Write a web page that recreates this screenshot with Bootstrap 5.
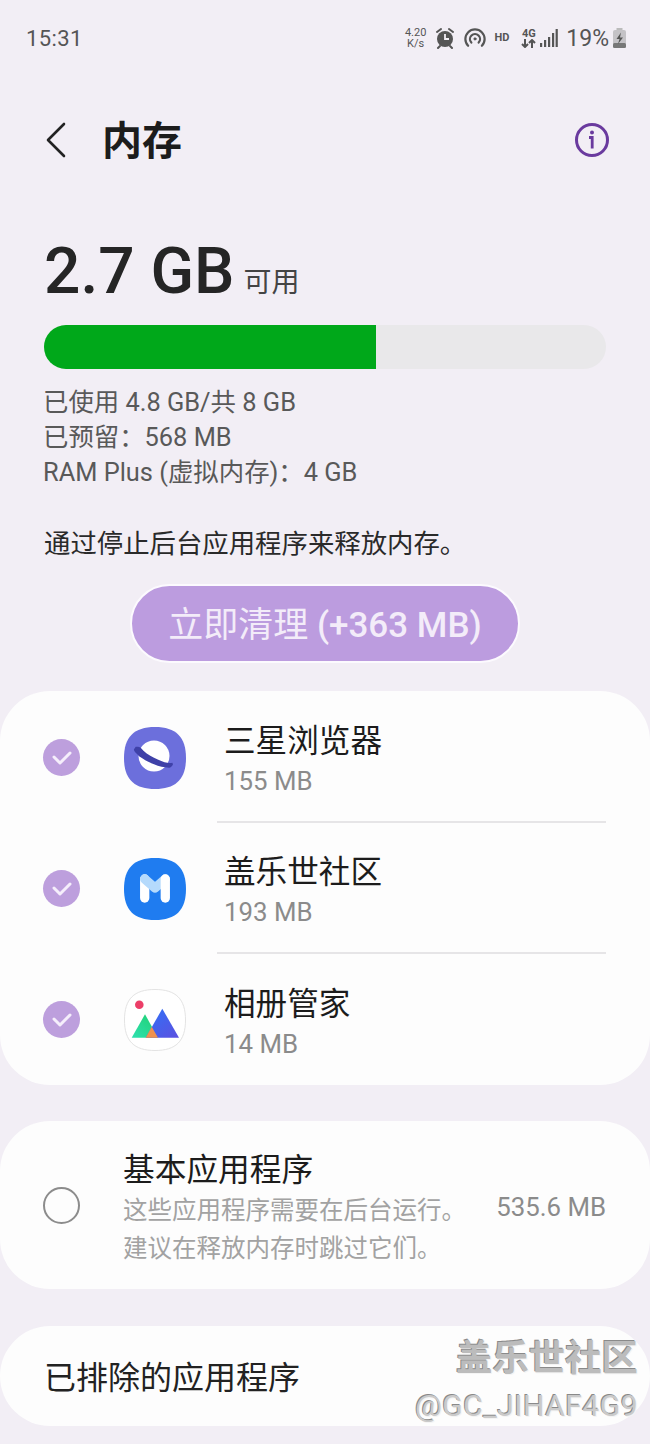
<!DOCTYPE html>
<html lang="zh">
<head>
  <meta charset="UTF-8">
  <title>内存</title>
  <meta name="viewport" content="width=device-width, initial-scale=1">
  <link href="https://cdn.jsdelivr.net/npm/bootstrap@5.3.0/dist/css/bootstrap.min.css" rel="stylesheet">
  <style>
    body {
      width: 650px;
      height: 1444px;
      overflow: hidden;
      position: relative;
      background: #f2eef5;
      font-family: Roboto, "Noto Sans CJK SC", sans-serif;
      color: #222;
    }

    .status-bar {
      height: 76px;
      padding: 0 24px 0 26px;
      color: #555;
    }
    .status-time { font-size: 22px; letter-spacing: .4px; }
    .status-speed { font-size: 11px; line-height: 11px; text-align: center; }
    .status-hd { font-size: 11px; font-weight: 700; }
    .status-4g { font-size: 11px; font-weight: 700; line-height: 10px; text-align: center; }
    .status-batt { font-size: 23px; padding-top: 3px; }

    .top-bar {
      height: 128px;
      padding: 0 40px 0 46px;
    }
    .top-title {
      font-size: 40px;
      font-weight: 700;
      color: #1c1c1c;
      margin: 4px 0 0 36px;
    }

    .free-line { padding: 36px 44px 0; height: 121px; }
    .free-num { font-size: 64px; font-weight: 500; line-height: 1; color: #252525; }
    .free-unit { font-size: 28px; line-height: 28px; color: #444; margin: 29px 0 0 9px; }

    .ram-bar {
      height: 44px;
      margin: 0 44px;
      border-radius: 22px;
      background: #e9e8ea;
    }
    .ram-bar .progress-bar { background: #00a81a; }

    .ram-info {
      margin: 16px 43px 0;
      font-size: 25.4px;
      line-height: 35px;
      color: #595959;
    }
    .ram-hint {
      margin: 37px 44px 0;
      font-size: 26.4px;
      line-height: 35px;
      color: #2a2a2a;
    }

    .clean-wrap { padding-top: 22px; }
    .btn-clean {
      width: 390px;
      height: 79px;
      padding: 5px 0 0;
      border: 2px solid #fcfafe;
      border-radius: 40px;
      background: #bc9cdf;
      color: #f3ecf9;
      font-size: 35px;
    }
    .btn-clean-num { font-weight: 500; }

    .panel {
      background: #fdfdfd;
      border-radius: 50px;
    }
    .panel-apps { margin-top: 28px; height: 394px; padding-top: 1px; }
    .panel-basic { margin-top: 36px; height: 168px; padding: 0 44px 0 43px; }
    .panel-excl {
      margin-top: 37px;
      height: 100px;
      padding: 3px 0 0 44px;
      font-size: 32px;
      color: #222;
    }

    .app-row { height: 131px; padding-left: 43px; }
    .check-dot {
      width: 37px;
      height: 37px;
      border-radius: 50%;
      background: #bd9fdd;
      flex: none;
    }
    .app-icon { width: 62px; height: 62px; margin-left: 44px; flex: none; }
    .app-text {
      height: 131px;
      margin: 0 44px 0 31px;
      padding: 6px 0 0 7px;
      flex: 1;
      border-bottom: 2px solid #e6e5e7;
    }
    .app-row:last-child .app-text { border-bottom: 0; }
    .app-name { font-size: 31.6px; line-height: 42px; color: #1c1c1c; }
    .app-size { font-size: 25.8px; line-height: 36px; color: #8b8b8b; }

    .radio-dot {
      width: 37px;
      height: 37px;
      border-radius: 50%;
      border: 2px solid #8c8c8c;
      flex: none;
    }
    .basic-text { margin-left: 43px; padding-top: 8px; }
    .basic-name { font-size: 31.7px; line-height: 42px; color: #1c1c1c; }
    .basic-desc { font-size: 24.5px; line-height: 38px; color: #a2a2a2; }
    .basic-size { font-size: 25.8px; color: #8b8b8b; padding-top: 4px; }

    /* forum stamp sits over the last panel */
    .stamp {
      position: absolute;
      right: 12px;
      top: 1337px;
      text-align: right;
      color: #bcbcbc;
      text-shadow: -1px -1px 0 #8a8a8a, 1px 1px 0 #f4f4f4;
    }
    .stamp-name { font-size: 36.4px; font-weight: 700; line-height: 44px; }
    .stamp-id { font-size: 30px; line-height: 40px; margin-top: 5px; letter-spacing: .5px; color: #cacaca; }
  </style>
</head>
<body>

  <div class="status-bar d-flex align-items-center justify-content-between">
    <span class="status-time">15:31</span>
    <div class="d-flex align-items-center gap-2">
      <div class="status-speed">4.20<br>K/s</div>
      <svg width="22" height="22" viewBox="0 0 22 22">
        <circle cx="11" cy="12" r="8" fill="#555"/>
        <path d="M3 5l4-3M19 5l-4-3M6 19l-2 2M16 19l2 2" stroke="#555" stroke-width="2" stroke-linecap="round" fill="none"/>
        <path d="M11 7v5h4" stroke="#f2eef5" stroke-width="1.8" fill="none"/>
      </svg>
      <svg width="22" height="22" viewBox="0 0 24 22" fill="none" stroke="#555" stroke-width="2.4" stroke-linecap="round">
        <path d="M4.5 19.5a10.5 10.5 0 1 1 15 0"/>
        <path d="M8 16a5.500 5.500 0 1 1 8 0"/>
        <circle cx="12" cy="12" r="1.2" fill="#555" stroke-width="1"/>
      </svg>
      <span class="status-hd">HD</span>
      <div class="d-flex align-items-center gap-1 ms-1">
        <div class="status-4g">4G<br>
          <svg width="15" height="9" viewBox="0 0 15 9" fill="none" stroke="#555" stroke-width="2" class="d-block"><path d="M4 0v8M1 5l3 3 3-3M11 9V1M8 4l3-3 3 3"/></svg>
        </div>
        <svg width="18" height="18" viewBox="0 0 18 18" fill="#555">
          <rect x="0" y="14" width="2.2" height="4"/><rect x="4" y="11" width="2.2" height="7"/><rect x="8" y="8" width="2.2" height="10"/><rect x="12" y="4" width="2.2" height="14"/><rect x="15.6" y="0" width="2.2" height="18"/>
        </svg>
      </div>
      <div class="d-flex align-items-center gap-1">
        <span class="status-batt">19%</span>
        <svg width="13" height="20" viewBox="0 0 13 20">
          <rect x="3.5" y="0" width="6" height="2" fill="#bbb"/>
          <rect x="0" y="2" width="13" height="18" rx="2" fill="#c4c2c6"/>
          <rect x="0" y="15" width="13" height="5" rx="1.5" fill="#777"/>
          <path d="M8 4.500L3.500 11h3l-1.500 5L10 9.500H7z" fill="#555"/>
        </svg>
      </div>
    </div>
  </div>

  <div class="top-bar d-flex align-items-center">
    <svg width="20" height="36" viewBox="0 0 20 36" fill="none" stroke="#222" stroke-width="2.6" stroke-linecap="round" stroke-linejoin="round">
      <path d="M18 2L2 18l16 16"/>
    </svg>
    <h1 class="top-title">内存</h1>
    <svg class="ms-auto" width="36" height="36" viewBox="0 0 36 36" fill="none" stroke="#6a3a9e" stroke-width="3">
      <circle cx="18" cy="18" r="15.5"/>
      <circle cx="18" cy="10.5" r="2" fill="#6a3a9e" stroke="none"/>
      <path d="M15 15.5h3.2v11" stroke-width="2.8"/>
    </svg>
  </div>

  <div class="free-line d-flex align-items-start">
    <span class="free-num">2.7 GB</span>
    <span class="free-unit">可用</span>
  </div>

  <div class="progress ram-bar">
    <div class="progress-bar" style="width: 59%"></div>
  </div>

  <div class="ram-info">
    <div>已使用 4.8 GB/共 8 GB</div>
    <div>已预留：568 MB</div>
    <div>RAM Plus (虚拟内存)：4 GB</div>
  </div>

  <p class="ram-hint mb-0">通过停止后台应用程序来释放内存。</p>

  <div class="clean-wrap text-center">
    <button class="btn btn-clean" type="button">立即清理 <span class="btn-clean-num">(+363 MB)</span></button>
  </div>

  <div class="panel panel-apps">
    <div class="app-row d-flex align-items-center">
      <div class="check-dot d-flex align-items-center justify-content-center">
        <svg width="20" height="15" viewBox="0 0 20 15" fill="none" stroke="#f5eefb" stroke-width="3" stroke-linecap="round" stroke-linejoin="round"><path d="M2 7l6 6L18 3"/></svg>
      </div>
      <svg class="app-icon" viewBox="0 0 62 62">
        <path d="M31 0C52 0 62 10 62 31S52 62 31 62 0 52 0 31 10 0 31 0z" fill="#6c6fdc"/>
        <circle cx="30" cy="29" r="15.500" fill="#fff"/>
        <path d="M11.700 19.700C14 19.500 16 20 16.700 20.700C20 25 25 28.500 30 30.700C35 33 40 35.500 43.300 35.700C45 36 47 36 48.300 35.700L49 37.300C48 40 46 41 45 40.700C40 40.500 35 39.500 30 37.300C22 34 15 30 13.300 27.300C11 25 9.500 23 10 22.300Z" fill="#3f41a8"/>
      </svg>
      <div class="app-text d-flex flex-column justify-content-center">
        <div class="app-name">三星浏览器</div>
        <div class="app-size">155 MB</div>
      </div>
    </div>
    <div class="app-row d-flex align-items-center">
      <div class="check-dot d-flex align-items-center justify-content-center">
        <svg width="20" height="15" viewBox="0 0 20 15" fill="none" stroke="#f5eefb" stroke-width="3" stroke-linecap="round" stroke-linejoin="round"><path d="M2 7l6 6L18 3"/></svg>
      </div>
      <svg class="app-icon" viewBox="0 0 62 62" fill="none" stroke-width="9.300" stroke-linecap="round" stroke-linejoin="round">
        <path d="M31 0C52 0 62 10 62 31S52 62 31 62 0 52 0 31 10 0 31 0z" fill="#1f7cf0"/>
        <path d="M20.700 21v19" stroke="#fff"/>
        <path d="M20.700 21L31 30 41.300 21" stroke="#b5dafc"/>
        <path d="M41.300 21v19" stroke="#fff"/>
      </svg>
      <div class="app-text d-flex flex-column justify-content-center">
        <div class="app-name">盖乐世社区</div>
        <div class="app-size">193 MB</div>
      </div>
    </div>
    <div class="app-row d-flex align-items-center">
      <div class="check-dot d-flex align-items-center justify-content-center">
        <svg width="20" height="15" viewBox="0 0 20 15" fill="none" stroke="#f5eefb" stroke-width="3" stroke-linecap="round" stroke-linejoin="round"><path d="M2 7l6 6L18 3"/></svg>
      </div>
      <svg class="app-icon" viewBox="0 0 62 62">
        <defs>
          <linearGradient id="peakGreen" x1="0" y1="1" x2="1" y2="0"><stop offset="0" stop-color="#2ee0b0"/><stop offset="1" stop-color="#1ed06e"/></linearGradient>
          <linearGradient id="peakBlue" x1="0" y1="0" x2="1" y2="1"><stop offset="0" stop-color="#2d73f8"/><stop offset="1" stop-color="#5d50e0"/></linearGradient>
        </defs>
        <path d="M31 .5C52 .5 61.500 10 61.500 31S52 61.500 31 61.500 .5 52 .5 31 10 .5 31 .5z" fill="#fff" stroke="#e3e3e3"/>
        <circle cx="15.300" cy="15.700" r="4.300" fill="#ec3f68"/>
        <path d="M7.700 48.700L21 25.300l13 23.400z" fill="url(#peakGreen)"/>
        <path d="M21.700 48.700L38.300 19.700 55 48.700z" fill="url(#peakBlue)"/>
        <path d="M21.700 48.700L27.700 37.700 34 48.700z" fill="#f0914e"/>
      </svg>
      <div class="app-text d-flex flex-column justify-content-center">
        <div class="app-name">相册管家</div>
        <div class="app-size">14 MB</div>
      </div>
    </div>
  </div>

  <div class="panel panel-basic d-flex align-items-center">
    <div class="radio-dot"></div>
    <div class="basic-text">
      <div class="basic-name">基本应用程序</div>
      <div class="basic-desc">这些应用程序需要在后台运行。<br>建议在释放内存时跳过它们。</div>
    </div>
    <div class="basic-size ms-auto">535.6 MB</div>
  </div>

  <div class="panel panel-excl d-flex align-items-center">已排除的应用程序</div>

  <div class="stamp">
    <div class="stamp-name">盖乐世社区</div>
    <div class="stamp-id">@GC_JIHAF4G9</div>
  </div>

  <script src="https://cdn.jsdelivr.net/npm/bootstrap@5.3.0/dist/js/bootstrap.bundle.min.js"></script>
</body>
</html>
